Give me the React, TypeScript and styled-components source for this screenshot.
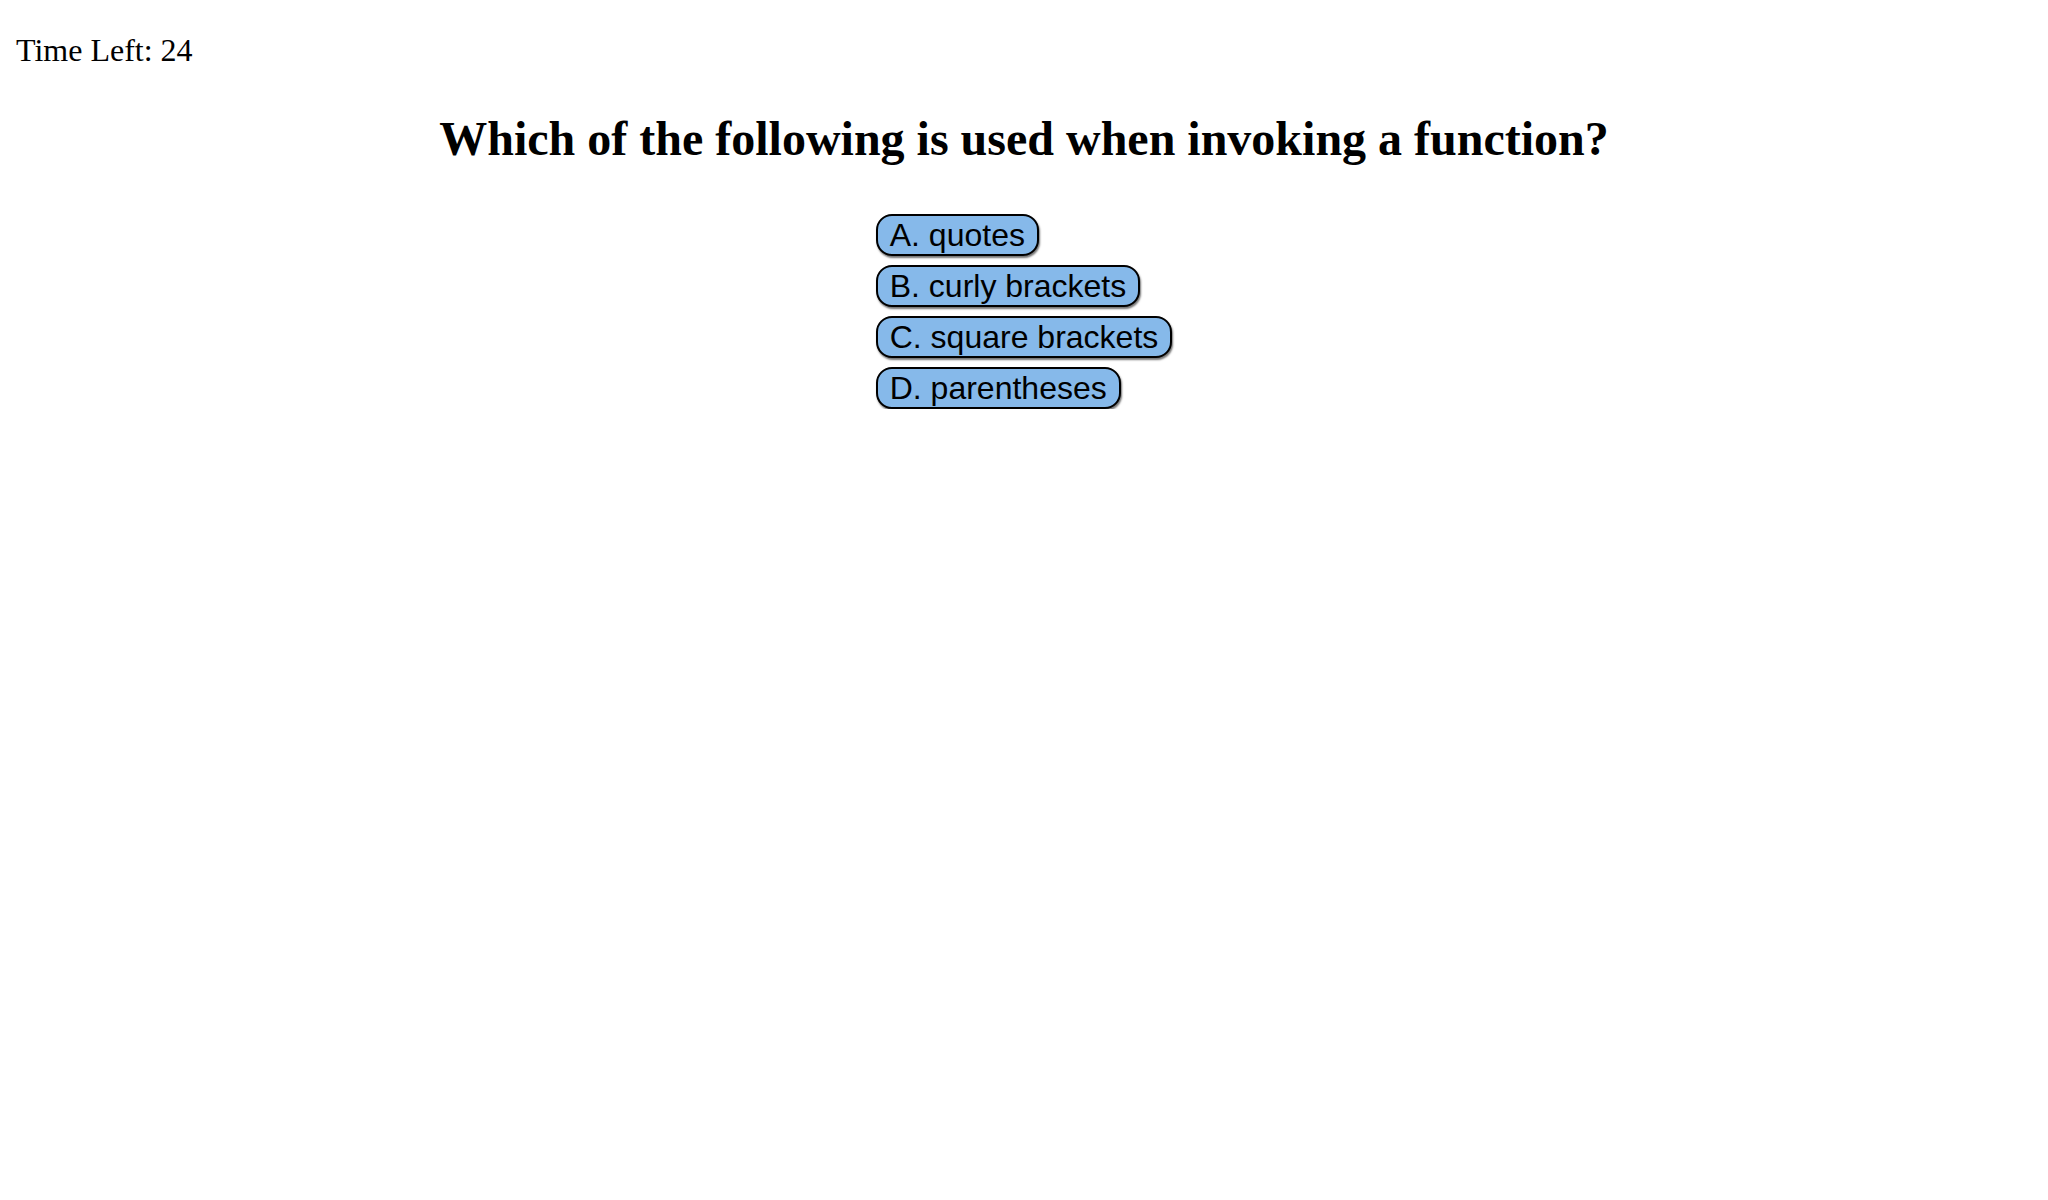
import React from "react";
import styled, { createGlobalStyle } from "styled-components";

const Global = createGlobalStyle`
  html, body { margin: 0; padding: 0; background: #ffffff; }
  body { font-family: "Liberation Serif", "Times New Roman", serif; color: #000; }
`;

const Page = styled.main`
  padding: 32px 16px 0;
`;

const Timer = styled.p`
  margin: 0;
  font-family: "Liberation Serif", "Times New Roman", serif;
  font-size: 32px;
  line-height: normal;
`;

const Question = styled.h1`
  margin: 42px 0 0;
  text-align: center;
  font-family: "Liberation Serif", "Times New Roman", serif;
  font-size: 48px;
  font-weight: bold;
  line-height: normal;
`;

const Answers = styled.div`
  display: flex;
  flex-direction: column;
  align-items: flex-start;
  gap: 9px;
  width: fit-content;
  margin: 48px auto 0;
`;

const AnswerButton = styled.button`
  font-family: "Liberation Sans", Arial, sans-serif;
  font-size: 32px;
  line-height: 36px;
  color: #000;
  background: #86b9ea;
  border: 2px solid #000;
  border-radius: 16px;
  padding: 1px 12px;
  box-shadow: 1px 2px 2px rgba(0, 0, 0, 0.55);
  cursor: pointer;
`;

const answers = ["A. quotes", "B. curly brackets", "C. square brackets", "D. parentheses"];

export default function App() {
  return (
    <>
      <Global />
      <Page>
        <Timer>Time Left: 24</Timer>
        <Question>Which of the following is used when invoking a function?</Question>
        <Answers>
          {answers.map((a) => (
            <AnswerButton key={a}>{a}</AnswerButton>
          ))}
        </Answers>
      </Page>
    </>
  );
}
